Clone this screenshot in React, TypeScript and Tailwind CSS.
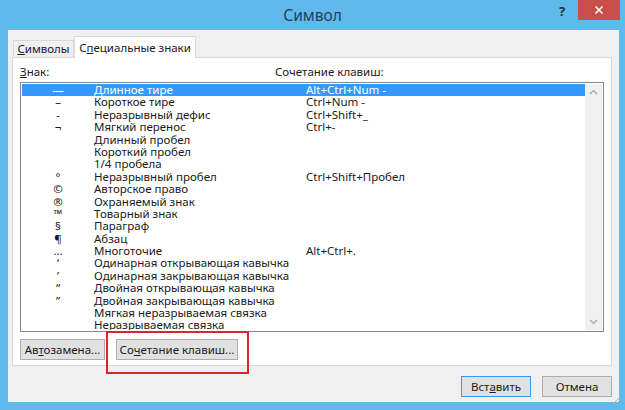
import React from "react";

type Row = { sym: string; name: string; keys?: string };

const ROWS: Row[] = [
  { sym: "—", name: "Длинное тире", keys: "Alt+Ctrl+Num -" },
  { sym: "–", name: "Короткое тире", keys: "Ctrl+Num -" },
  { sym: "-", name: "Неразрывный дефис", keys: "Ctrl+Shift+_" },
  { sym: "¬", name: "Мягкий перенос", keys: "Ctrl+-" },
  { sym: "", name: "Длинный пробел" },
  { sym: "", name: "Короткий пробел" },
  { sym: "", name: "1/4 пробела" },
  { sym: "°", name: "Неразрывный пробел", keys: "Ctrl+Shift+Пробел" },
  { sym: "©", name: "Авторское право" },
  { sym: "®", name: "Охраняемый знак" },
  { sym: "™", name: "Товарный знак" },
  { sym: "§", name: "Параграф" },
  { sym: "¶", name: "Абзац" },
  { sym: "…", name: "Многоточие", keys: "Alt+Ctrl+." },
  { sym: "‘", name: "Одинарная открывающая кавычка" },
  { sym: "’", name: "Одинарная закрывающая кавычка" },
  { sym: "“", name: "Двойная открывающая кавычка" },
  { sym: "”", name: "Двойная закрывающая кавычка" },
  { sym: "", name: "Мягкая неразрываемая связка" },
  { sym: "", name: "Неразрываемая связка" },
];

const font = { fontFamily: '"Noto Sans", "Open Sans", sans-serif' };

function Btn({ children, className = "" }: { children: React.ReactNode; className?: string }) {
  return (
    <div
      className={`h-[21px] flex items-center justify-center border bg-[#e1e1e1] text-[11.5px] text-[#1a1a1a] ${className}`}
    >
      {children}
    </div>
  );
}

export default function App() {
  return (
    <div className="w-[625px] h-[410px] bg-[#5fb9ea] flex flex-col overflow-hidden relative" style={font}>
      {/* title bar */}
      <div className="h-[30px] flex items-start relative">
        <div className="flex-1 flex justify-center pt-[4px] text-[15.5px] text-[#22405e]">Символ</div>
        <div className="absolute left-[559px] top-[2px] text-[13px] font-bold text-[#1d2f44]">?</div>
        <div className="absolute left-[578px] top-0 w-[42px] h-[20px] bg-[#c9504a] flex items-center justify-center">
          <svg width="10" height="10" viewBox="0 0 10 10">
            <path d="M1.5 1.5 L8.5 8.5 M8.5 1.5 L1.5 8.5" stroke="white" strokeWidth="1.6" />
          </svg>
        </div>
      </div>

      {/* client area */}
      <div className="ml-[8px] mr-[6px] mb-[8px] flex-1 bg-[#f0f0f0] flex flex-col pl-[4px] pr-[7px] relative">
        {/* tabs */}
        <div className="h-[27px] flex items-end pt-[6px]">
          <div className="ml-[1px] h-[17px] w-[61px] border border-b-0 border-[#d9d9d9] bg-[#f0f0f0] flex items-center justify-center text-[11.5px] text-[#1a1a1a]">
            <span>
              <span className="underline">С</span>имволы
            </span>
          </div>
          <div className="h-[22px] w-[122px] border border-b-0 border-[#d9d9d9] bg-white flex items-center justify-center text-[11.5px] text-[#1a1a1a] -mb-px relative z-10">
            <span>
              С<span className="underline">п</span>ециальные знаки
            </span>
          </div>
        </div>

        {/* panel */}
        <div className="h-[309px] border border-[#d9d9d9] bg-white flex flex-col px-[7px]">
          <div className="h-[24px] flex items-end pb-[2px] text-[11.5px] text-[#1a1a1a]">
            <div className="w-[255px]">
              <span className="underline">З</span>нак:
            </div>
            <div>Сочетание клавиш:</div>
          </div>

          {/* list box */}
          <div className="h-[250px] border border-[#828790] bg-white flex p-[1px]">
            <div className="flex-1 flex flex-col overflow-hidden">
              {ROWS.map((r, i) => {
                const sel = i === 0;
                return (
                  <div
                    key={r.name}
                    className={`h-[12.4px] shrink-0 flex items-center text-[11.5px] leading-[12.4px] ${
                      sel ? "bg-[#3399ff] text-white" : "text-[#1a1a1a]"
                    }`}
                  >
                    <div className="w-[72px] flex justify-center">{r.sym}</div>
                    <div className="w-[212px] whitespace-nowrap">{r.name}</div>
                    <div className="whitespace-nowrap">{r.keys}</div>
                  </div>
                );
              })}
            </div>
            {/* scrollbar */}
            <div className="w-[17px] bg-[#f0f0f0] flex flex-col justify-between items-center py-[5px]">
              <svg width="9" height="6" viewBox="0 0 9 6">
                <path d="M1 5 L4.5 1.5 L8 5" fill="none" stroke="#a6a6a6" strokeWidth="1.2" />
              </svg>
              <svg width="9" height="6" viewBox="0 0 9 6">
                <path d="M1 1 L4.5 4.5 L8 1" fill="none" stroke="#a6a6a6" strokeWidth="1.2" />
              </svg>
            </div>
          </div>

          <div className="flex gap-[11px] pt-[7px]">
            <Btn className="w-[85px] border-[#adadad]">
              <span>
                Ав<span className="underline">т</span>озамена...
              </span>
            </Btn>
            <Btn className="w-[122px] border-[#adadad]">
              <span>
                Со<span className="underline">ч</span>етание клавиш...
              </span>
            </Btn>
          </div>
        </div>

        {/* bottom buttons */}
        <div className="flex justify-end gap-[11px] pt-[10px]">
          <Btn className="w-[70px] border-[#3399ff]">
            <span>
              Вст<span className="underline">а</span>вить
            </span>
          </Btn>
          <Btn className="w-[70px] border-[#adadad]">Отмена</Btn>
        </div>

        {/* resize grip */}
        <svg className="absolute right-[-2px] bottom-[-2px]" width="9" height="9" viewBox="0 0 9 9">
          <path d="M8 2 L2 8 M8 5 L5 8" stroke="#9fb4c4" strokeWidth="1" />
        </svg>
      </div>

      {/* red highlight annotation */}
      <div className="absolute left-[106px] top-[331px] w-[143px] h-[43px] border-2 border-[#d8262e]" />
    </div>
  );
}
